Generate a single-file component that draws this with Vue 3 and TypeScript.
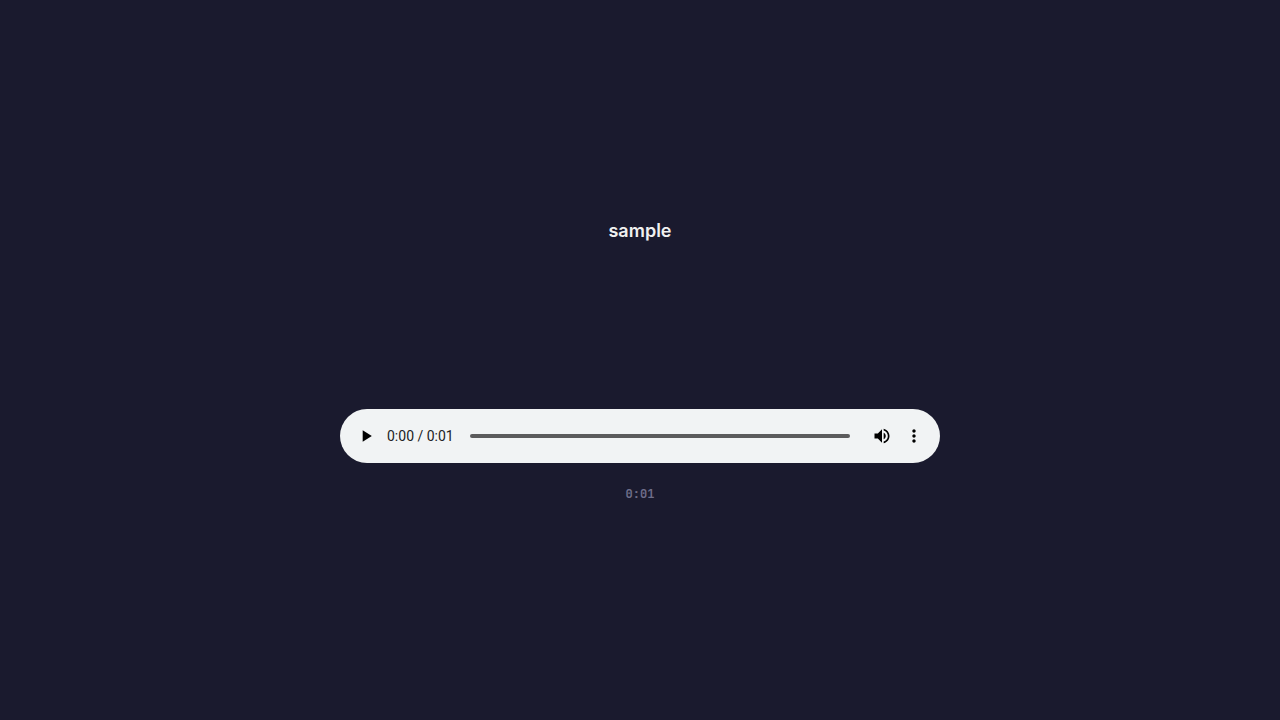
<script setup lang="ts">
import { ref } from 'vue'

const title = 'sample'
const elapsed = '0:00'
const duration = '0:01'
const position = ref<number>(0)
</script>

<template>
  <main class="page">
    <h1 class="title">{{ title }}</h1>
    <section class="player" aria-label="Audio player">
      <button class="control" type="button" aria-label="Play">
        <svg viewBox="0 0 24 24" aria-hidden="true"><path d="M8 5v14l11-7z" /></svg>
      </button>
      <span class="time">{{ elapsed }} / {{ duration }}</span>
      <input v-model.number="position" class="timeline" type="range" min="0" max="1" step="0.01" aria-label="Seek" />
      <button class="control" type="button" aria-label="Mute">
        <svg viewBox="0 0 24 24" aria-hidden="true">
          <path d="M3 9v6h4l5 5V4L7 9H3zm13.5 3c0-1.77-1.02-3.29-2.5-4.03v8.05c1.48-.73 2.5-2.25 2.5-4.02zM14 3.23v2.06c2.89.86 5 3.54 5 6.71s-2.11 5.85-5 6.71v2.06c4.01-.91 7-4.49 7-8.77s-2.99-7.86-7-8.77z" />
        </svg>
      </button>
      <button class="control" type="button" aria-label="More options">
        <svg viewBox="0 0 24 24" aria-hidden="true">
          <path d="M12 8c1.1 0 2-.9 2-2s-.9-2-2-2-2 .9-2 2 .9 2 2 2zm0 2c-1.1 0-2 .9-2 2s.9 2 2 2 2-.9 2-2-.9-2-2-2zm0 6c-1.1 0-2 .9-2 2s.9 2 2 2 2-.9 2-2-.9-2-2-2z" />
        </svg>
      </button>
    </section>
    <p class="duration">{{ duration }}</p>
  </main>
</template>

<style>
body {
  margin: 0;
  background: #1a1a2e;
}
</style>

<style scoped>
.page {
  box-sizing: border-box;
  min-height: 100vh;
  padding: 0 24px;
  display: flex;
  flex-direction: column;
  align-items: center;
  justify-content: center;
  background: #1a1a2e;
}

.title {
  margin: 0 0 164px;
  color: #f0f0f0;
  font: 600 18px/28px Inter, sans-serif;
}

.player {
  box-sizing: border-box;
  width: 100%;
  max-width: 600px;
  height: 54px;
  padding: 0 10px;
  display: flex;
  align-items: center;
  border-radius: 27px;
  background: #f1f3f4;
}

.control {
  flex: none;
  width: 32px;
  height: 32px;
  padding: 0;
  display: grid;
  place-items: center;
  border: 0;
  background: none;
  cursor: pointer;
}

.control svg {
  width: 20px;
  height: 20px;
  fill: #000;
}

.time {
  flex: none;
  margin: 0 16px 0 5px;
  color: #202124;
  font: 400 14px/20px Roboto, sans-serif;
}

.timeline {
  flex: 1;
  min-width: 0;
  height: 4px;
  margin: 0 16px 0 0;
  appearance: none;
  border-radius: 2px;
  background: #5b5b5c;
  cursor: pointer;
}

.timeline::-webkit-slider-thumb {
  appearance: none;
  width: 12px;
  height: 12px;
  opacity: 0;
}

.duration {
  margin: 22px 0 0;
  color: #6e6e8a;
  font: 600 12px/18px "JetBrains Mono", "DejaVu Sans Mono", monospace;
}
</style>
